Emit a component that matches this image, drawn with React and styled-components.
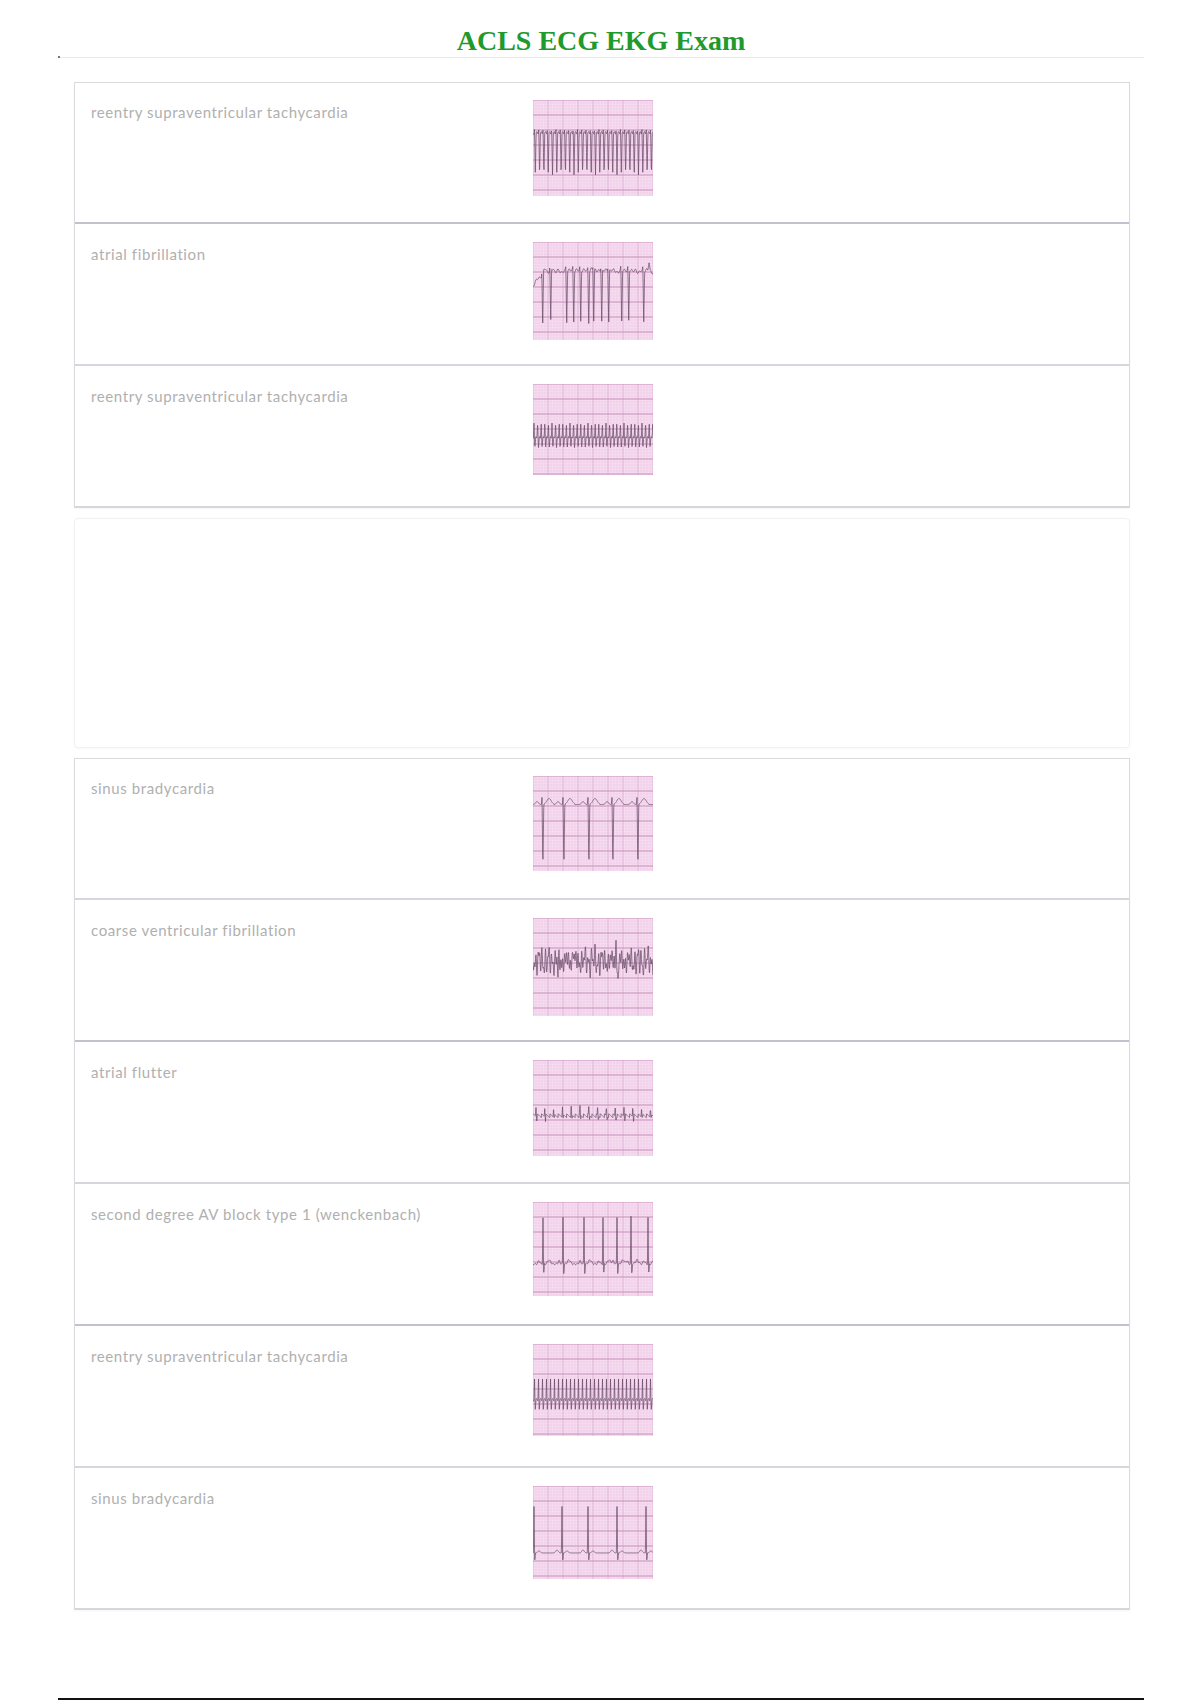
import React from 'react';
import styled, { createGlobalStyle } from 'styled-components';

// deterministic helpers for drawing rhythm strips
const spike = (x, c, w, a) => {
  const d = Math.abs(x - c);
  return d < w ? a * (1 - d / w) : 0;
};
const bump = (x, c, w, a) => a * Math.exp(-((x - c) ** 2) / (2 * w * w));
const every = (start, step, end) => {
  const out = [];
  for (let v = start; v < end; v += step) out.push(v);
  return out;
};
const sumBeats = (x, beats, shape) =>
  beats.reduce((s, c) => s + (Math.abs(x - c) < 12 ? shape(x - c) : 0), 0);

const rhythms = {
  svtWide: (x, h) =>
    h * 0.36 +
    sumBeats(x, every(1.5, 4.3, 124), (d) =>
      spike(d, 0, 0.7, -5) + spike(d, 0.8, 0.8, h * 0.42) + bump(d, 2.4, 0.6, -3)
    ),
  afib: (x, h) =>
    h * 0.3 +
    (x < 12 ? (12 - x) * 1.1 : 0) +
    Math.sin(x * 1.7) * 1.2 +
    Math.sin(x * 0.9 + 1) * 1.3 +
    spike(x, 116, 1.2, -8) +
    sumBeats(x, [9, 17, 33, 40, 47, 55, 60, 68, 75, 88, 95, 110], (d) =>
      spike(d, 0, 0.7, -4) + spike(d, 0.7, 0.9, h * 0.55) + bump(d, 3, 1.2, -2.5)
    ),
  svtNarrow: (x, h) =>
    h * 0.6 +
    sumBeats(x, every(1, 3.6, 124), (d) =>
      spike(d, 0, 0.7, -h * 0.17) + spike(d, 0.9, 0.8, h * 0.1) + bump(d, 2, 0.5, -2)
    ),
  bradyDeep: (x, h) =>
    h * 0.3 +
    sumBeats(x, [9, 30, 55, 79, 104], (d) =>
      bump(d, -5, 1.3, -3) +
      spike(d, 0, 0.6, -7) +
      spike(d, 0.9, 0.9, h * 0.65) +
      bump(d, 7, 2.2, -6)
    ),
  coarseVf: (x, h) =>
    h * 0.44 +
    Math.sin(x * 1.9) * 9 * (0.6 + 0.4 * Math.sin(x * 0.13)) +
    Math.sin(x * 3.3 + 1) * 6 +
    Math.sin(x * 0.7) * 4 +
    spike(x, 83, 1, -20) +
    spike(x, 85, 1, 24) +
    spike(x, 25, 1, 16) +
    spike(x, 40, 1, -14),
  flutter: (x, h) =>
    h * 0.58 +
    (((x % 4.2) / 4.2) * 4 - 2) +
    sumBeats(x, every(3, 8.8, 124), (d) => spike(d, 0, 0.6, -9) + spike(d, 0.7, 0.7, 4)),
  wenckebach: (x, h) =>
    h * 0.66 +
    Math.sin(x * 2.1) * 0.8 +
    sumBeats(x, [10, 30, 51, 70, 84, 98, 115], (d) =>
      bump(d, -4, 1, -3) +
      spike(d, 0, 0.6, -h * 0.5) +
      spike(d, 0.8, 0.7, h * 0.1) +
      bump(d, 6, 1.5, -4)
    ),
  svtTall: (x, h) =>
    h * 0.62 +
    sumBeats(x, every(1.5, 4, 124), (d) =>
      spike(d, 0, 0.6, -h * 0.24) + spike(d, 0.8, 0.7, h * 0.1) + bump(d, 2, 0.6, -2.5)
    ),
  bradyTall: (x, h) =>
    h * 0.72 +
    sumBeats(x, [1, 29, 55, 84, 113], (d) =>
      bump(d, -5, 1.2, -3) +
      spike(d, 0, 0.6, -h * 0.5) +
      spike(d, 0.8, 0.7, h * 0.08) +
      bump(d, 5, 1.3, -2)
    ),
};

const EcgStrip = ({ rhythm, height, width = 120 }) => {
  const fn = rhythms[rhythm];
  const minorV = [];
  const majorV = [];
  for (let x = 0; x <= width; x += 3) (x % 15 === 0 ? majorV : minorV).push(x);
  const minorH = [];
  const majorH = [];
  for (let y = 0; y <= height; y += 3) (y % 15 === 0 ? majorH : minorH).push(y);

  let d = '';
  for (let x = 0; x <= width; x += 0.25) {
    const y = Math.max(1, Math.min(height - 1, fn(x, height)));
    d += `${d ? 'L' : 'M'}${x.toFixed(2)} ${y.toFixed(2)}`;
  }

  return (
    <Strip width={width} height={height} viewBox={`0 0 ${width} ${height}`}>
      <rect width={width} height={height} fill="#f6dcf0" />
      <g stroke="#edc3e4" strokeWidth="0.5">
        {minorV.map((x) => (
          <line key={`v${x}`} x1={x} y1={0} x2={x} y2={height} />
        ))}
        {minorH.map((y) => (
          <line key={`h${y}`} x1={0} y1={y} x2={width} y2={y} />
        ))}
      </g>
      <g stroke="#d7a3cb" strokeWidth="0.8">
        {majorV.map((x) => (
          <line key={`V${x}`} x1={x} y1={0} x2={x} y2={height} />
        ))}
      </g>
      <g stroke="#c284b3" strokeWidth="1">
        {majorH.map((y) => (
          <line key={`H${y}`} x1={0} y1={y} x2={width} y2={y} />
        ))}
      </g>
      <path d={d} fill="none" stroke="#5d3d5c" strokeWidth="0.75" strokeLinejoin="round" />
    </Strip>
  );
};

const firstCards = [
  { term: 'reentry supraventricular tachycardia', rhythm: 'svtWide', h: 96, dark: true },
  { term: 'atrial fibrillation', rhythm: 'afib', h: 98 },
  { term: 'reentry supraventricular tachycardia', rhythm: 'svtNarrow', h: 91 },
];

const secondCards = [
  { term: 'sinus bradycardia', rhythm: 'bradyDeep', h: 95 },
  { term: 'coarse ventricular fibrillation', rhythm: 'coarseVf', h: 98, dark: true },
  { term: 'atrial flutter', rhythm: 'flutter', h: 96 },
  { term: 'second degree AV block type 1 (wenckenbach)', rhythm: 'wenckebach', h: 94, dark: true },
  { term: 'reentry supraventricular tachycardia', rhythm: 'svtTall', h: 92 },
  { term: 'sinus bradycardia', rhythm: 'bradyTall', h: 93 },
];

const CardList = ({ cards }) => (
  <CardGroup>
    {cards.map((card, i) => (
      <Row key={i} $dark={card.dark}>
        <Term>{card.term}</Term>
        <Definition>
          <EcgStrip rhythm={card.rhythm} height={card.h} />
        </Definition>
      </Row>
    ))}
  </CardGroup>
);

const App = () => (
  <>
    <GlobalStyle />
    <Page>
      <Header>
        <Title>ACLS ECG EKG Exam</Title>
      </Header>
      <Cards>
        <CardList cards={firstCards} />
        <Placeholder />
        <CardList cards={secondCards} />
      </Cards>
      <FooterRule />
    </Page>
  </>
);

const GlobalStyle = createGlobalStyle`
  body {
    margin: 0;
    background: #ffffff;
    font-family: Lato, "Open Sans", sans-serif;
  }
`;

const Page = styled.div`
  width: 1200px;
  padding: 0 56px 0 58px;
  box-sizing: border-box;
`;

const Header = styled.header`
  position: relative;
  padding-top: 25px;
  border-bottom: 1px solid #e9e9e9;
  text-align: center;
  &::before {
    content: '';
    position: absolute;
    left: 0;
    bottom: -1px;
    width: 2px;
    height: 2px;
    background: #777;
  }
`;

const Title = styled.h1`
  margin: 0;
  font-family: "Liberation Serif", "Times New Roman", serif;
  font-size: 28px;
  line-height: 32px;
  font-weight: 700;
  color: #1f9a2c;
`;

const Cards = styled.main`
  display: flex;
  flex-direction: column;
  gap: 10px;
  margin: 24px 14px 0 16px;
`;

const CardGroup = styled.section`
  border: 1px solid #d9d9de;
  border-bottom: none;
  box-shadow: 0 1px 2px rgba(0, 0, 0, 0.04);
`;

const Row = styled.article`
  display: grid;
  grid-template-columns: 442px 1fr;
  align-items: start;
  height: 142px;
  box-sizing: border-box;
  padding: 18px 16px 0;
  border-bottom: 2px solid ${({ $dark }) => ($dark ? '#c2c2cf' : '#d6d6dc')};
  &:first-child {
    height: 141px;
    padding-top: 17px;
  }
`;

const Term = styled.div`
  padding-top: 2px;
  font-size: 15px;
  line-height: 20px;
  letter-spacing: 0.6px;
  color: #b0b0b0;
`;

const Definition = styled.div`
  display: flex;
`;

const Strip = styled.svg`
  display: block;
  opacity: 0.92;
`;

const Placeholder = styled.div`
  height: 230px;
  box-sizing: border-box;
  border: 1px solid #f1f1f1;
  border-radius: 4px;
  box-shadow: 0 1px 3px rgba(0, 0, 0, 0.03);
`;

const FooterRule = styled.div`
  margin-top: 88px;
  height: 2px;
  background: #111;
`;

export default App;
